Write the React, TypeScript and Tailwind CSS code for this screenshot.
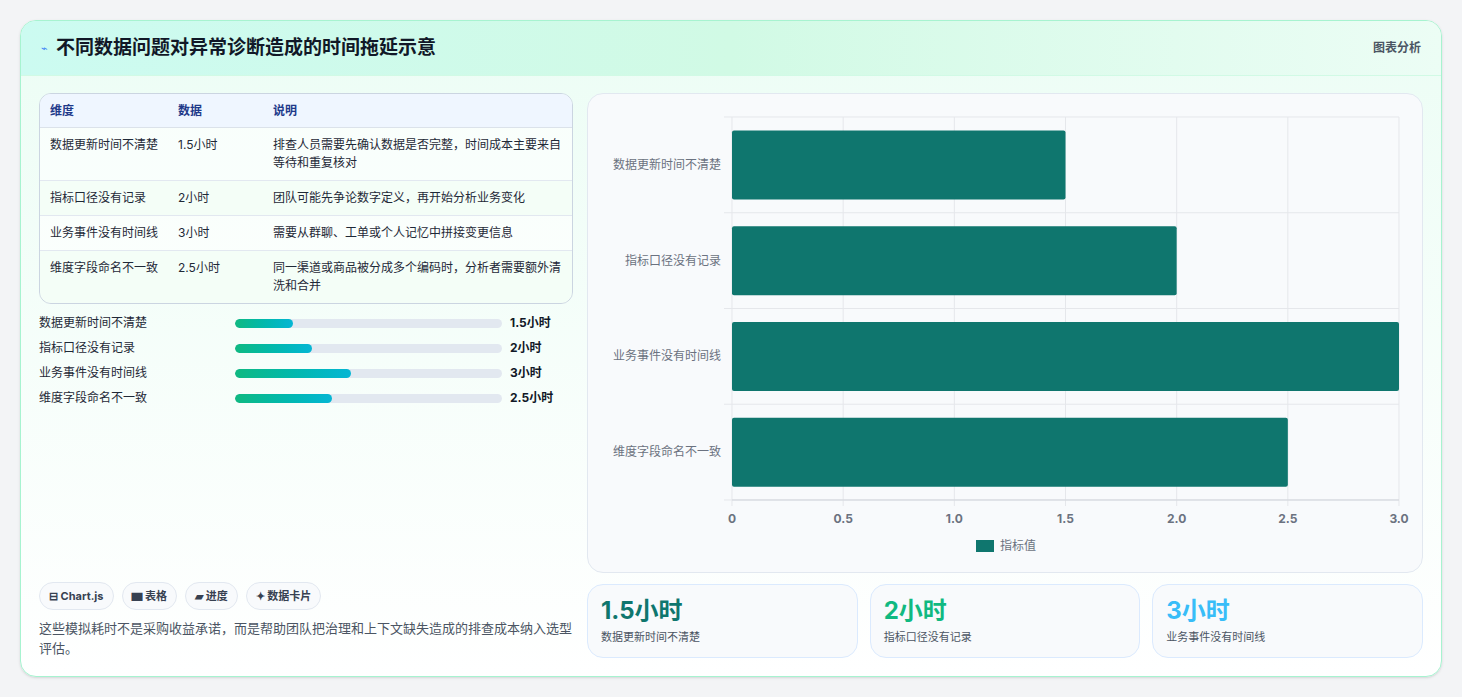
import React from "react";

const rows = [
  ["数据更新时间不清楚", "1.5小时", "排查人员需要先确认数据是否完整，时间成本主要来自等待和重复核对", 1.5],
  ["指标口径没有记录", "2小时", "团队可能先争论数字定义，再开始分析业务变化", 2],
  ["业务事件没有时间线", "3小时", "需要从群聊、工单或个人记忆中拼接变更信息", 3],
  ["维度字段命名不一致", "2.5小时", "同一渠道或商品被分成多个编码时，分析者需要额外清洗和合并", 2.5],
] as const;

function Chart() {
  const x0 = 144, x1 = 811, y0 = 23, y1 = 406;
  const band = (y1 - y0) / 4;
  const sx = (v: number) => x0 + ((x1 - x0) * v) / 3;
  return (
    <svg width="834" height="478" viewBox="0 0 834 478" className="block">
      {[0, 0.5, 1, 1.5, 2, 2.5, 3].map((t) => (
        <g key={t}>
          <line x1={sx(t)} x2={sx(t)} y1={y0} y2={y1 + 6} stroke="#e5e7eb" />
          <text x={sx(t)} y={429} textAnchor="middle" fontSize="12" fontWeight="700" fill="#6b7280" fontFamily="Inter, sans-serif">
            {t === 0 ? "0" : t.toFixed(1)}
          </text>
        </g>
      ))}
      {[0, 1, 2, 3, 4].map((i) => (
        <line key={i} x1={x0 - 8} x2={x1} y1={y0 + band * i} y2={y0 + band * i} stroke="#e5e7eb" />
      ))}
      <line x1={x0} x2={x1} y1={y1} y2={y1} stroke="#d1d5db" />
      {rows.map((r, i) => {
        const cy = y0 + band * i + band / 2;
        return (
          <g key={i}>
            <rect x={x0} y={cy - 34.5} width={sx(r[3]) - x0} height={69} rx={2} fill="#0f766e" />
            <text x={133} y={cy + 4} textAnchor="end" fontSize="12" fill="#6b7280" fontFamily="'Noto Sans CJK SC', sans-serif">{r[0]}</text>
          </g>
        );
      })}
      <rect x={388} y={446} width={18} height={12} fill="#0f766e" />
      <text x={412} y={456} fontSize="12" fill="#6b7280" fontFamily="'Noto Sans CJK SC', sans-serif">指标值</text>
    </svg>
  );
}

export default function App() {
  return (
    <div className="min-h-screen bg-[#f3f4f6] p-5 pb-5" style={{ fontFamily: "Inter, 'Noto Sans CJK SC', sans-serif" }}>
      <div className="h-[657px] rounded-2xl border border-[#a7f3d0] bg-gradient-to-b from-[#ecfdf5] to-white overflow-hidden flex flex-col shadow-sm">
        <div className="h-[55px] shrink-0 flex items-center justify-between px-5 bg-gradient-to-r from-[#ccfbf1] via-[#d1fae5] to-[#ecfdf5] border-b border-[#d1fae5]">
          <div className="flex items-center gap-2">
            <span className="text-[11px] text-[#3b82f6]">⌁</span>
            <h1 className="text-[19px] font-bold text-[#111827]">不同数据问题对异常诊断造成的时间拖延示意</h1>
          </div>
          <span className="text-xs font-bold text-[#4b5563]">图表分析</span>
        </div>
        <div className="flex-1 flex gap-[14px] px-[18px] pt-[17px] pb-[18px]">
          <div className="w-[535px] flex flex-col">
            <div className="rounded-xl border border-[#cbd5e1] overflow-hidden bg-white/60 text-xs">
              <div className="grid grid-cols-[128px_95px_1fr] bg-[#eff6ff] h-[34px] items-center px-[10px] font-bold text-[#1e3a8a] border-b border-[#dbe2ea]">
                <span>维度</span><span>数据</span><span>说明</span>
              </div>
              {rows.map((r, i) => (
                <div key={i} className={`grid grid-cols-[128px_95px_1fr] px-[10px] py-[8px] leading-[18px] text-[#1f2937] ${i < 3 ? "border-b border-[#e2e8f0]" : ""} ${i % 2 === 1 ? "bg-[#f0fdf4]/60" : ""}`}>
                  <span>{r[0]}</span><span>{r[1]}</span><span>{r[2]}</span>
                </div>
              ))}
            </div>
            <div className="mt-[10px] flex flex-col gap-[7px]">
              {rows.map((r, i) => (
                <div key={i} className="flex items-center h-[18px] text-xs">
                  <span className="w-[196px] text-[#1f2937]">{r[0]}</span>
                  <div className="w-[267px] h-[9px] rounded-full bg-[#e2e8f0] overflow-hidden">
                    <div className="h-full rounded-full bg-gradient-to-r from-[#10b981] to-[#06b6d4]" style={{ width: `${(r[3] / 3) * 43.5}%` }} />
                  </div>
                  <span className="ml-2 font-bold text-[#111827]">{r[1]}</span>
                </div>
              ))}
            </div>
            <div className="mt-auto flex gap-2 text-[11px] font-bold text-[#374151]">
              {["⊟ Chart.js", "▆ 表格", "▰ 进度", "✦ 数据卡片"].map((c) => (
                <span key={c} className="h-[28px] px-[9px] flex items-center rounded-full border border-[#e2e8f0] bg-[#f8fafc]">{c}</span>
              ))}
            </div>
            <p className="mt-[8px] text-[13px] leading-[20px] text-[#4b5563]">这些模拟耗时不是采购收益承诺，而是帮助团队把治理和上下文缺失造成的排查成本纳入选型评估。</p>
          </div>
          <div className="flex-1 flex flex-col gap-[11px]">
            <div className="h-[480px] rounded-2xl border border-[#e2e8f0] bg-[#f8fafc]"><Chart /></div>
            <div className="grid grid-cols-3 gap-3">
              {[["1.5小时", "数据更新时间不清楚", "text-[#0f766e]"], ["2小时", "指标口径没有记录", "text-[#10b981]"], ["3小时", "业务事件没有时间线", "text-[#38bdf8]"]].map(([v, l, c]) => (
                <div key={l} className="h-[74px] rounded-2xl border border-[#dbeafe] bg-[#f8fafc] px-[13px] pt-[10px]">
                  <div className={`text-[24px] font-bold leading-[32px] ${c}`}>{v}</div>
                  <div className="text-[11px] text-[#4b5563] mt-[2px]">{l}</div>
                </div>
              ))}
            </div>
          </div>
        </div>
      </div>
    </div>
  );
}
